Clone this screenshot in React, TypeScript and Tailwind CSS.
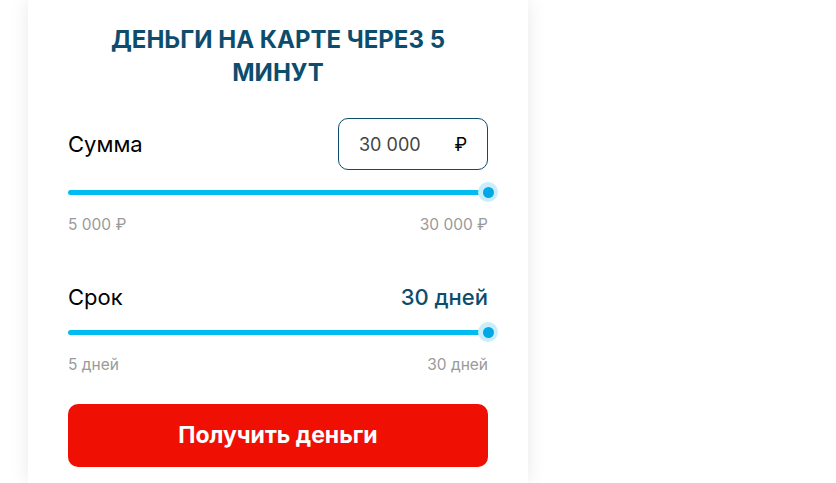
import React from "react";

function Slider() {
  return (
    <div className="relative h-5 flex items-center">
      <div className="h-[5px] w-full rounded-full bg-[#00bcf0]" />
      <div className="absolute right-[-10px] top-1/2 -translate-y-1/2 w-5 h-5 rounded-full bg-[#c8eefb] flex items-center justify-center">
        <div className="w-[11px] h-[11px] rounded-full bg-[#00a8e8]" />
      </div>
    </div>
  );
}

export default function App() {
  return (
    <div className="w-[836px] h-[483px] bg-white overflow-hidden" style={{ fontFamily: "Inter, 'Noto Sans', sans-serif" }}>
      <div className="ml-[28px] w-[500px] h-[483px] bg-white shadow-[0_0_18px_rgba(0,0,0,0.09)] px-10 pt-[23px]">
        <h1 className="px-8 text-center text-[24px] leading-[33px] font-bold text-[#0c4d6d]">
          ДЕНЬГИ НА КАРТЕ ЧЕРЕЗ 5 МИНУТ
        </h1>
        <div className="mt-[29px] flex items-center justify-between">
          <span className="text-[22px] leading-[28px] text-black">Сумма</span>
          <div className="w-[150px] h-[52px] rounded-[10px] border border-[#0c4d6d] flex items-center justify-between pl-5 pr-5">
            <span className="text-[18px] text-[#444]">30 000</span>
            <span className="text-[18px] text-black">₽</span>
          </div>
        </div>
        <div className="mt-[12px]">
          <Slider />
        </div>
        <div className="mt-[13px] flex justify-between text-[15.5px] leading-[20px] text-[#9a9a9a]">
          <span>5 000 ₽</span>
          <span>30 000 ₽</span>
        </div>
        <div className="mt-[48px] flex items-center justify-between">
          <span className="text-[22px] leading-[28px] text-black">Срок</span>
          <span className="text-[22px] leading-[28px] font-medium text-[#0c4d6d]">30 дней</span>
        </div>
        <div className="mt-[11px]">
          <Slider />
        </div>
        <div className="mt-[13px] flex justify-between text-[15.5px] leading-[20px] text-[#9a9a9a]">
          <span>5 дней</span>
          <span>30 дней</span>
        </div>
        <button className="mt-[29px] w-full h-[63px] rounded-[10px] bg-[#ef1003] text-white text-[23px] font-bold">
          Получить деньги
        </button>
      </div>
    </div>
  );
}
